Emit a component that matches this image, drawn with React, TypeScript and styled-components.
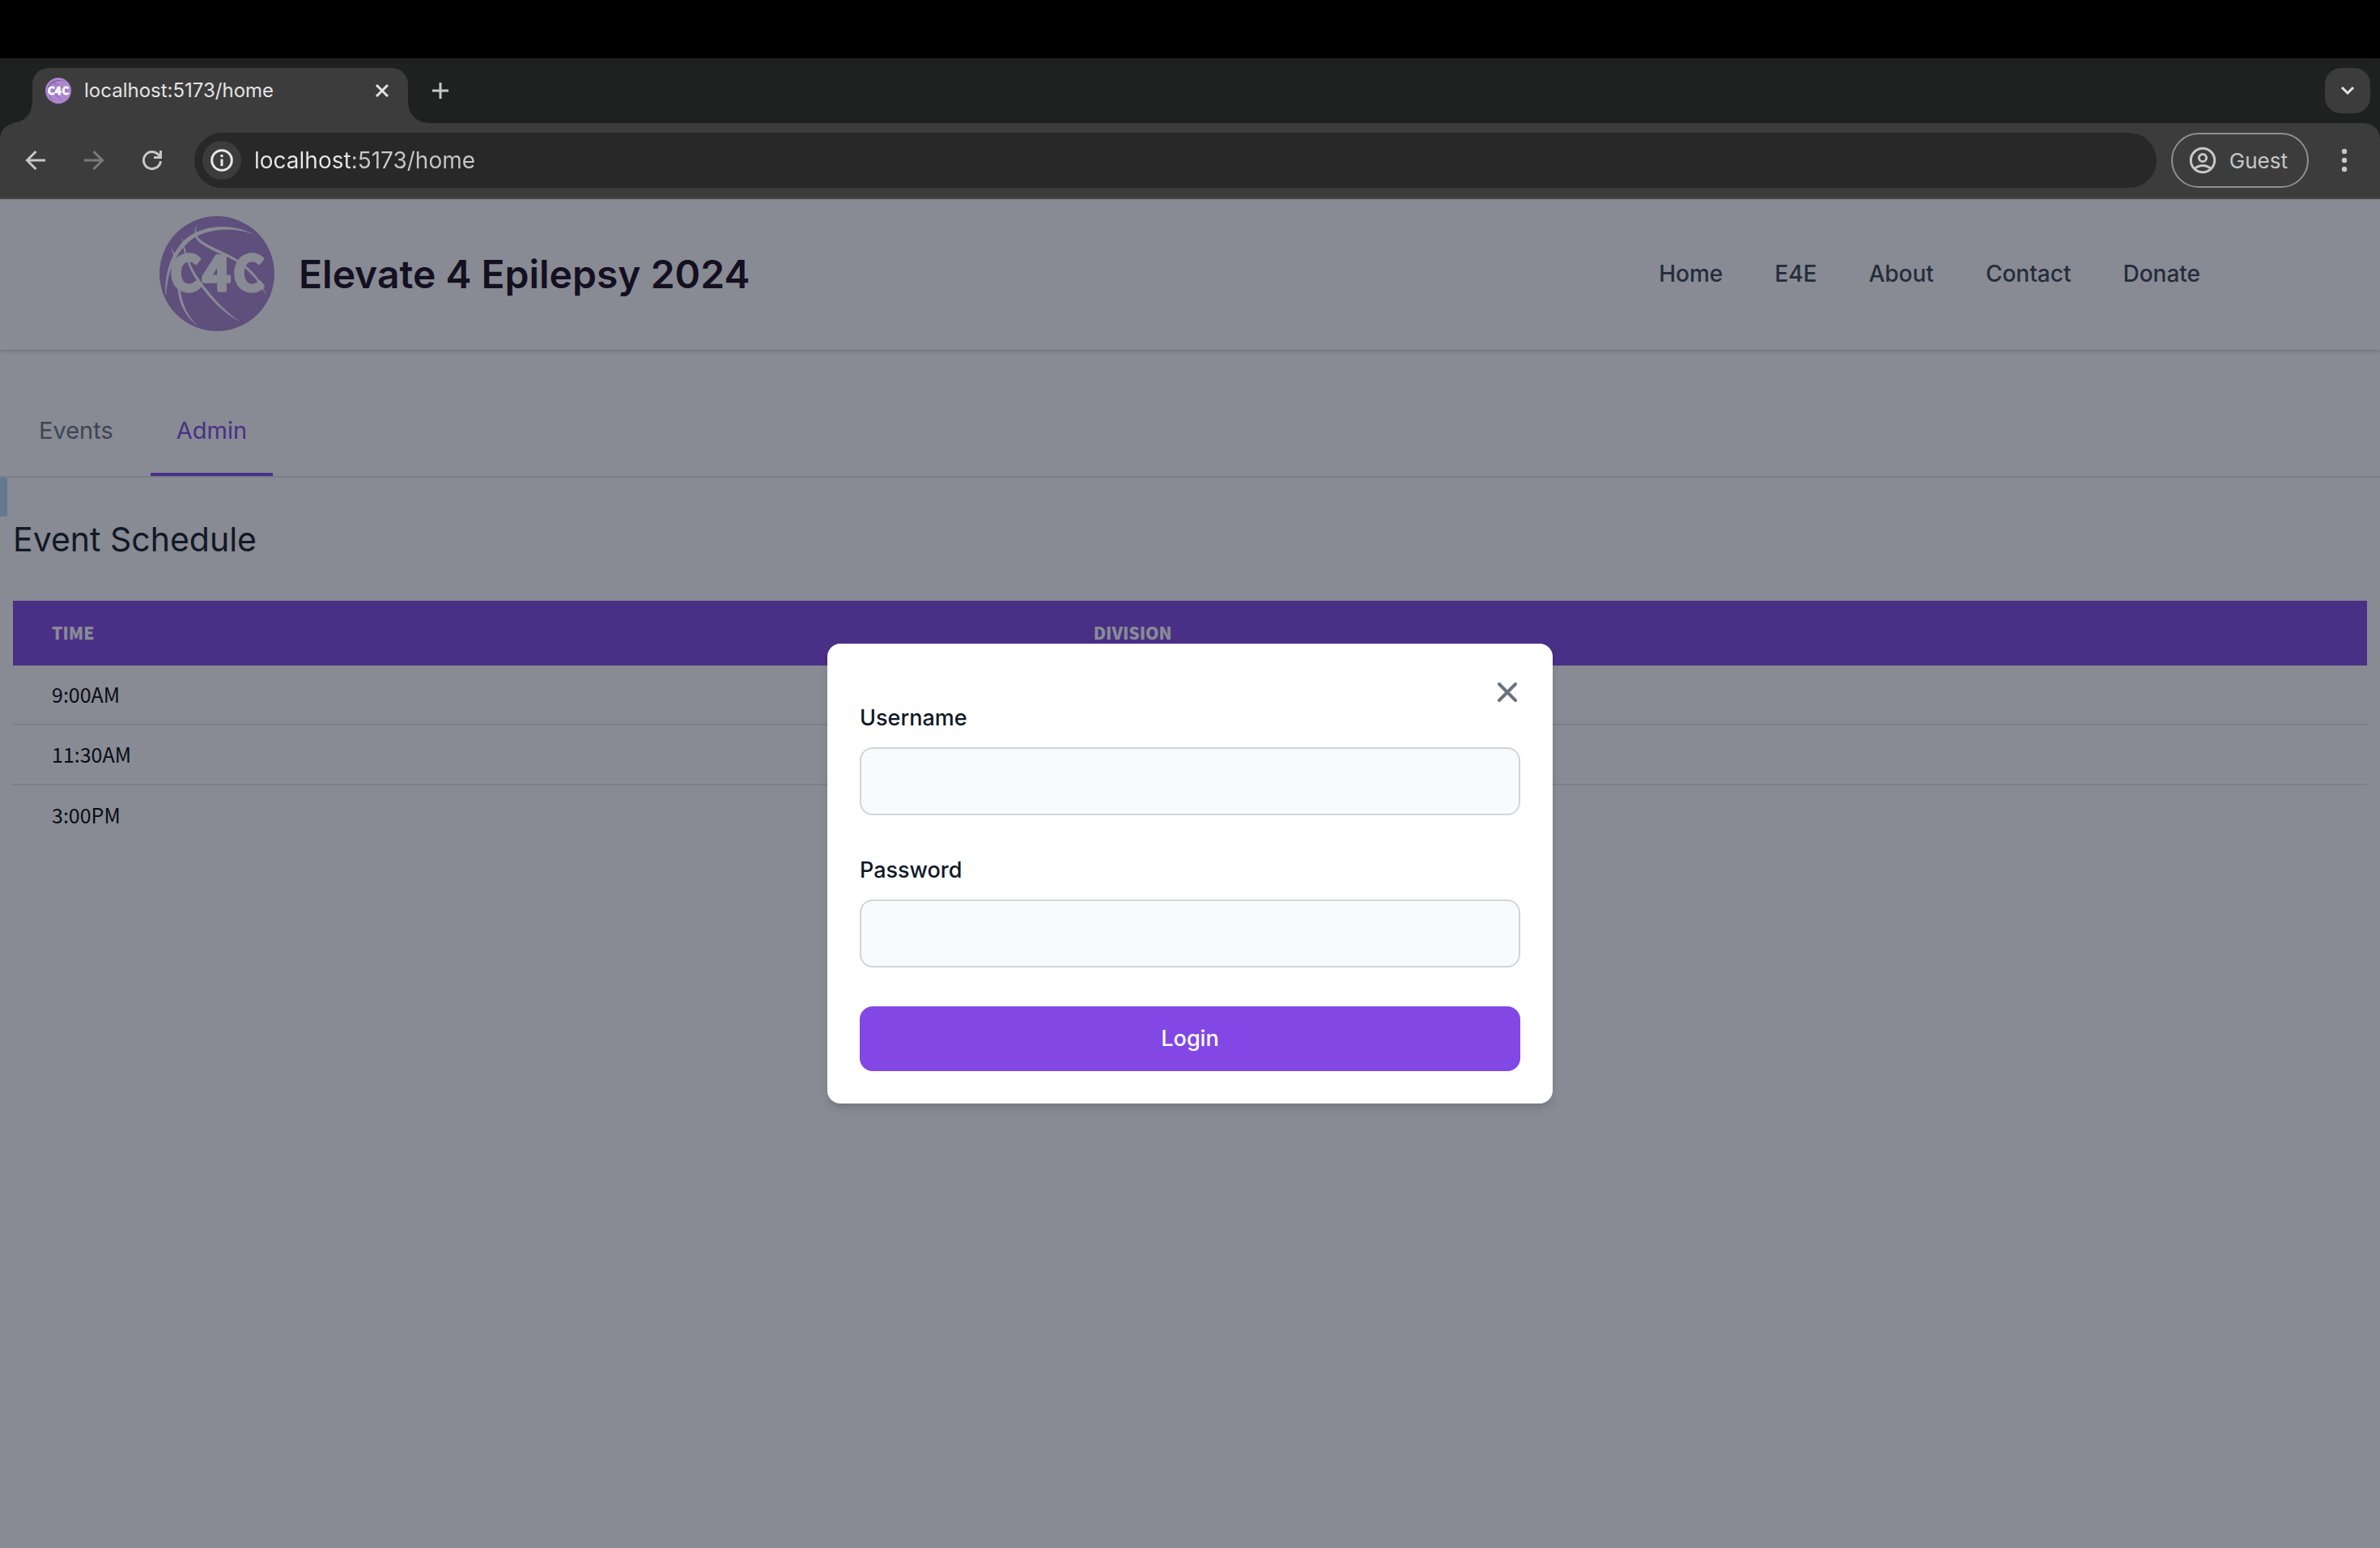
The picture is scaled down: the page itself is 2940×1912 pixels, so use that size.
import React from "react";
import styled, { createGlobalStyle } from "styled-components";

const uiFont = `Inter, "Liberation Sans", sans-serif`;
const tableFont = `"Noto Sans CJK JP", "Noto Sans", sans-serif`;

const GlobalStyle = createGlobalStyle`
  *, *::before, *::after { box-sizing: border-box; }
  body { margin: 0; background: #000; font-family: ${uiFont}; }
  button, input { font: inherit; color: inherit; border: 0; margin: 0; padding: 0; background: none; }
  button { cursor: pointer; }
  svg { display: block; flex: none; }
`;

const Screen = styled.div`
  display: flex;
  flex-direction: column;
  min-height: 100vh;
  padding-top: 72px;
`;

/* Browser window */

const TabStrip = styled.div`
  display: flex;
  align-items: flex-end;
  height: 80px;
  padding: 0 12px 0 40px;
  background: #1f2120;
`;

const Tab = styled.div`
  position: relative;
  display: flex;
  align-items: center;
  gap: 16px;
  width: 464px;
  height: 68px;
  padding: 0 12px 12px 16px;
  border-radius: 20px 20px 0 0;
  background: #3c3c3c;
  color: #e3e3e3;
  font-size: 24px;
  line-height: 32px;

  &::before,
  &::after {
    content: "";
    position: absolute;
    bottom: 0;
    width: 24px;
    height: 24px;
  }
  &::before {
    right: 100%;
    background: radial-gradient(circle at 0 0, transparent 23px, #3c3c3c 24px);
  }
  &::after {
    left: 100%;
    background: radial-gradient(circle at 100% 0, transparent 23px, #3c3c3c 24px);
  }
`;

const TabTitle = styled.span`
  flex: 1;
`;

const IconButton = styled.button<{ $size: number; $color?: string }>`
  display: flex;
  align-items: center;
  justify-content: center;
  flex: none;
  width: ${(p) => p.$size}px;
  height: ${(p) => p.$size}px;
  color: ${(p) => p.$color ?? "#c7c7c7"};
`;

const NewTab = styled(IconButton)`
  margin: 0 auto 12px 12px;
`;

const TabSearch = styled(IconButton)`
  margin-bottom: 12px;
  border-radius: 20px;
  background: #3c3c3c;
`;

const ToolbarBack = styled.div`
  background: #1f2120;
`;

const Toolbar = styled.div`
  display: flex;
  align-items: center;
  height: 94px;
  padding: 0 20px 0 8px;
  border-radius: 20px 20px 0 0;
  border-bottom: 2px solid #474949;
  background: #3c3c3c;
`;

const HistoryButtons = styled.div`
  display: flex;
  margin-right: 16px;
`;

const AddressBar = styled.div`
  display: flex;
  align-items: center;
  flex: 1;
  gap: 16px;
  height: 68px;
  padding: 0 24px 0 10px;
  border-radius: 34px;
  background: #282828;
`;

const SiteInfo = styled(IconButton)`
  border-radius: 50%;
  background: #3c3c3c;
`;

const Address = styled.input`
  flex: 1;
  height: 40px;
  background: linear-gradient(to right, #e8e8e8 120px, #c7c7c7 120px);
  background-clip: text;
  -webkit-background-clip: text;
  color: transparent;
  font-size: 28px;
  line-height: 40px;
  outline: 0;
`;

const Profile = styled.button`
  display: flex;
  align-items: center;
  gap: 16px;
  height: 68px;
  margin: 0 20px 0 18px;
  padding: 0 24px 0 20px;
  border: 2px solid #8f8f8f;
  border-radius: 34px;
  color: #c7c7c7;
  font-size: 26px;
`;

/* Page */

const Viewport = styled.div`
  position: relative;
  flex: 1;
  background: #fff;
`;

const Header = styled.header`
  padding: 14px 32px 16px;
  background: #fff;
  box-shadow: 0 2px 6px rgba(0, 0, 0, 0.1), 0 2px 4px rgba(0, 0, 0, 0.1);
`;

const HeaderInner = styled.div`
  display: flex;
  align-items: center;
  justify-content: space-between;
  max-width: 2560px;
  height: 156px;
  margin: 0 auto;
`;

const Brand = styled.a`
  display: flex;
  align-items: center;
  gap: 30px;
  padding-left: 7px;
  color: #17091b;
  font-size: 48px;
  font-weight: 600;
  text-decoration: none;
`;

const Nav = styled.nav`
  display: flex;
  gap: 64px;
  padding-right: 32px;
`;

const NavLink = styled.a`
  color: #374151;
  font-size: 28px;
  font-weight: 500;
  line-height: 40px;
  text-decoration: none;
`;

const PageTabs = styled.div`
  display: flex;
  gap: 14px;
  margin-top: 64px;
  padding: 0 16px;
  border-bottom: 2px solid #e5e7eb;
`;

const PageTab = styled.button<{ $active?: boolean }>`
  padding: 16px 32px 32px;
  border-bottom: 4px solid ${(p) => (p.$active ? "#8247e5" : "transparent")};
  color: ${(p) => (p.$active ? "#8247e5" : "#6b7280")};
  font-size: 29px;
  line-height: 40px;
`;

const SelectionMark = styled.div`
  width: 9px;
  height: 48px;
  background: #b7d8f7;
`;

const Schedule = styled.main`
  padding: 0 16px;
`;

const ScheduleTitle = styled.h1`
  margin: 0 0 48px;
  color: #111827;
  font-size: 41px;
  font-weight: 400;
  line-height: 56px;
`;

const Table = styled.table`
  width: 100%;
  border-collapse: separate;
  border-spacing: 0;
  table-layout: fixed;
  font-family: ${tableFont};
  text-align: left;
`;

const HeadCell = styled.th<{ $width?: string }>`
  width: ${(p) => p.$width ?? "auto"};
  height: 80px;
  padding: 0 48px 2px;
  background: #8247e5;
  color: #fff;
  font-size: 21px;
  font-weight: 900;
  line-height: 32px;
  text-transform: uppercase;
`;

const Row = styled.tr`
  &:not(:last-child) td {
    border-bottom: 2px solid #e5e7eb;
  }
`;

const Cell = styled.td`
  height: 74px;
  padding: 0 48px 2px;
  color: #000;
  font-size: 25px;
  line-height: 40px;
`;

/* Login dialog */

const Overlay = styled.div`
  position: absolute;
  inset: 0;
  display: flex;
  align-items: center;
  justify-content: center;
  background: rgba(17, 24, 39, 0.5);
`;

const Dialog = styled.div`
  width: 896px;
  border-radius: 16px;
  background: #fff;
  box-shadow: 0 8px 12px -2px rgba(0, 0, 0, 0.1), 0 4px 8px -4px rgba(0, 0, 0, 0.1);
`;

const DialogTop = styled.div`
  display: flex;
  justify-content: flex-end;
  padding: 48px 44px 0;
`;

const Form = styled.form`
  display: flex;
  flex-direction: column;
  gap: 48px;
  padding: 0 40px 40px;
  font-size: 27px;
  font-weight: 500;
  line-height: 40px;
`;

const Field = styled.div`
  display: flex;
  flex-direction: column;
  gap: 16px;
`;

const Label = styled.label`
  color: #111827;
`;

const TextInput = styled.input`
  height: 84px;
  padding: 0 20px;
  border: 2px solid #d1d5db;
  border-radius: 16px;
  background: #f9fafb;
`;

const Submit = styled.button`
  height: 80px;
  border-radius: 16px;
  background: #8247e5;
  color: #fff;
`;

const LogoMark = ({ size, seams = "#fff" }: { size: number; seams?: string }) => (
  <svg width={size} height={size} viewBox="36 37 426 426" aria-hidden="true">
    <circle cx="249" cy="250" r="213" fill="#ad86d1" />
    <g fill={seams}>
      <path d="M58 328C54 220 100 130 170 98C230 68 315 68 384 104C315 78 235 82 178 110C112 144 64 230 61 328Z" />
      <path d="M175 66C168 98 172 112 190 126C230 156 285 170 330 202C385 238 418 280 432 332C410 285 376 246 326 209C280 180 220 164 182 132C164 116 162 96 175 66Z" />
      <path d="M118 108C132 170 150 225 184 272C228 335 276 388 338 430C274 396 222 345 176 278C144 230 122 170 118 108Z" />
      <path d="M80 152C86 170 93 176 101 190L96 196C88 182 82 172 80 152Z" />
      <path d="M112 300C118 360 138 405 180 446C132 410 106 360 103 300Z" />
    </g>
    <text
      x="133 247 367"
      y="312"
      textAnchor="middle"
      fontFamily="'Noto Sans CJK JP', sans-serif"
      fontSize="180"
      fontWeight="700"
      fill="#fff"
      stroke="#fff"
      strokeWidth="10"
      strokeLinejoin="round"
    >
      C4C
    </text>
  </svg>
);

const Stroke = ({
  size,
  width,
  d,
  round,
}: {
  size: number;
  width: number;
  d: string;
  round?: boolean;
}) => (
  <svg
    width={size}
    height={size}
    viewBox={`0 0 ${size} ${size}`}
    fill="none"
    stroke="currentColor"
    strokeWidth={width}
    strokeLinecap={round ? "round" : "butt"}
    aria-hidden="true"
  >
    <path d={d} />
  </svg>
);

const InfoIcon = () => (
  <svg width="28" height="28" viewBox="0 0 28 28" fill="none" stroke="currentColor" strokeWidth="3" aria-hidden="true">
    <circle cx="14" cy="14" r="12.3" />
    <path d="M14 12.5V21" />
    <path d="M14 7V10" />
  </svg>
);

const ProfileIcon = () => (
  <svg width="34" height="34" viewBox="0 0 34 34" fill="none" stroke="currentColor" strokeWidth="3" aria-hidden="true">
    <circle cx="17" cy="17" r="14.7" />
    <circle cx="17" cy="14" r="4.6" />
    <path d="M7 27.5C12 22 22 22 27 27.5" />
  </svg>
);

const MenuIcon = () => (
  <svg width="8" height="30" viewBox="0 0 8 30" fill="currentColor" aria-hidden="true">
    <circle cx="4" cy="4" r="3.2" />
    <circle cx="4" cy="15" r="3.2" />
    <circle cx="4" cy="26" r="3.2" />
  </svg>
);

const navItems = ["Home", "E4E", "About", "Contact", "Donate"];
const times = ["9:00AM", "11:30AM", "3:00PM"];

export default function App() {
  return (
    <Screen>
      <GlobalStyle />
      <TabStrip>
        <Tab>
          <LogoMark size={32} seams="#75598f" />
          <TabTitle>localhost:5173/home</TabTitle>
          <IconButton $size={40} $color="#e3e3e3" aria-label="Close tab">
            <Stroke size={18} width={3} d="M2 2L16 16M16 2L2 16" />
          </IconButton>
        </Tab>
        <NewTab $size={56} aria-label="New tab">
          <Stroke size={20} width={3} d="M10 0V20M0 10H20" />
        </NewTab>
        <TabSearch $size={56} $color="#e3e3e3" aria-label="Search tabs">
          <Stroke size={18} width={3} d="M2 5L9 12L16 5" />
        </TabSearch>
      </TabStrip>

      <ToolbarBack>
        <Toolbar>
          <HistoryButtons>
            <IconButton $size={72} aria-label="Back">
              <Stroke size={26} width={3} d="M25 13H3M13.5 2L2.5 13L13.5 24" />
            </IconButton>
            <IconButton $size={72} $color="#7b7b7b" aria-label="Forward">
              <Stroke size={26} width={3} d="M1 13H23M12.5 2L23.5 13L12.5 24" />
            </IconButton>
            <IconButton $size={72} aria-label="Reload">
              <Stroke size={24} width={3} d="M22.4 13A10.5 10.5 0 1 1 19.4 4.6L22 7.5M22.5 0V8.5H14" />
            </IconButton>
          </HistoryButtons>
          <AddressBar>
            <SiteInfo $size={48} $color="#e8e8e8" aria-label="Site information">
              <InfoIcon />
            </SiteInfo>
            <Address aria-label="Address" defaultValue="localhost:5173/home" />
          </AddressBar>
          <Profile>
            <ProfileIcon />
            Guest
          </Profile>
          <IconButton $size={48} aria-label="Menu">
            <MenuIcon />
          </IconButton>
        </Toolbar>
      </ToolbarBack>

      <Viewport>
        <Header>
          <HeaderInner>
            <Brand href="#home">
              <LogoMark size={142} />
              Elevate 4 Epilepsy 2024
            </Brand>
            <Nav>
              {navItems.map((item) => (
                <NavLink key={item} href={`#${item.toLowerCase()}`}>
                  {item}
                </NavLink>
              ))}
            </Nav>
          </HeaderInner>
        </Header>

        <PageTabs role="tablist">
          <PageTab role="tab" aria-selected={false}>
            Events
          </PageTab>
          <PageTab role="tab" aria-selected $active>
            Admin
          </PageTab>
        </PageTabs>
        <SelectionMark />

        <Schedule>
          <ScheduleTitle>Event Schedule</ScheduleTitle>
          <Table>
            <thead>
              <tr>
                <HeadCell $width="44.25%">Time</HeadCell>
                <HeadCell>Division</HeadCell>
              </tr>
            </thead>
            <tbody>
              {times.map((time) => (
                <Row key={time}>
                  <Cell>{time}</Cell>
                  <Cell />
                </Row>
              ))}
            </tbody>
          </Table>
        </Schedule>

        <Overlay>
          <Dialog role="dialog" aria-modal="true" aria-label="Login">
            <DialogTop>
              <IconButton $size={24} $color="#6b7280" aria-label="Close">
                <Stroke size={24} width={4} round d="M2 2L22 22M22 2L2 22" />
              </IconButton>
            </DialogTop>
            <Form onSubmit={(e) => e.preventDefault()}>
              <Field>
                <Label htmlFor="username">Username</Label>
                <TextInput id="username" type="text" />
              </Field>
              <Field>
                <Label htmlFor="password">Password</Label>
                <TextInput id="password" type="password" />
              </Field>
              <Submit type="submit">Login</Submit>
            </Form>
          </Dialog>
        </Overlay>
      </Viewport>
    </Screen>
  );
}
